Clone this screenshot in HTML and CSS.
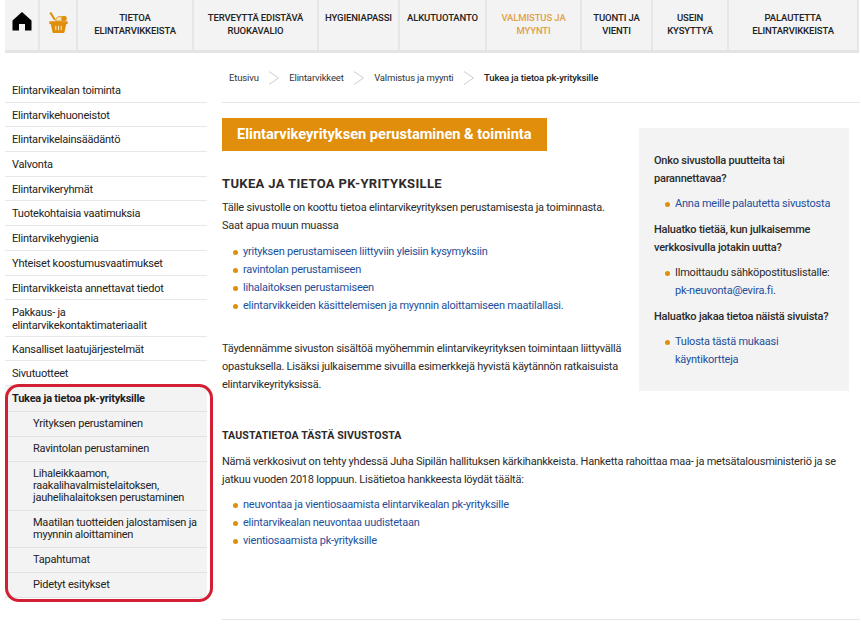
FILE: index.html
```html
<!DOCTYPE html>
<html lang="fi">
<head>
<meta charset="utf-8">
<title>Tukea ja tietoa pk-yrityksille</title>
<link rel="stylesheet" href="styles.css">
</head>
<body>
<nav class="topnav">
  <a class="nav-item w-home"><svg width="20" height="20" viewBox="0 0 20 20"><path d="M10 1 L19.500 9.500 V19.500 H13 V13 H7 V19.500 H.5 V9.500 Z" fill="#000"/></svg></a>
  <a class="nav-item w-basket"><svg width="21" height="22" viewBox="0 0 22 24"><path d="M1 1 L3 0 L8 8 L6 9 Z" fill="#e08e0b"/><path d="M8 8 Q11 3 16 6 L15 10 H8 Z" fill="#f6e3c0" stroke="#e08e0b"/><circle cx="17" cy="7" r="3" fill="#e08e0b"/><path d="M1 10 H21 V13 H19.500 L17.500 22 Q17 23 16 23 H6 Q5 23 4.500 22 L2.500 13 H1 Z" fill="#e08e0b"/><path d="M8 15 V20 M11 15 V20 M14 15 V20" stroke="#f6e3c0" stroke-width="1.200"/></svg></a>
  <a class="nav-item w1">TIETOA<br>ELINTARVIKKEISTA</a>
  <a class="nav-item w2">TERVEYTTÄ EDISTÄVÄ<br>RUOKAVALIO</a>
  <a class="nav-item w3">HYGIENIAPASSI</a>
  <a class="nav-item w4">ALKUTUOTANTO</a>
  <a class="nav-item w5 current">VALMISTUS JA<br>MYYNTI</a>
  <a class="nav-item w6">TUONTI JA<br>VIENTI</a>
  <a class="nav-item w7">USEIN<br>KYSYTTYÄ</a>
  <a class="nav-item w8">PALAUTETTA<br>ELINTARVIKKEISTA</a>
</nav>

<div class="page">
  <aside class="sidebar">
    <ul class="side-list">
      <li>Elintarvikealan toiminta</li>
      <li>Elintarvikehuoneistot</li>
      <li>Elintarvikelainsäädäntö</li>
      <li>Valvonta</li>
      <li>Elintarvikeryhmät</li>
      <li>Tuotekohtaisia vaatimuksia</li>
      <li>Elintarvikehygienia</li>
      <li>Yhteiset koostumusvaatimukset</li>
      <li>Elintarvikkeista annettavat tiedot</li>
      <li class="multi">Pakkaus- ja elintarvikekontaktimateriaalit</li>
      <li>Kansalliset laatujärjestelmät</li>
      <li>Sivutuotteet</li>
    </ul>
    <div class="active-group">
      <div class="active-title">Tukea ja tietoa pk-yrityksille</div>
      <ul class="sub-list">
        <li>Yrityksen perustaminen</li>
        <li>Ravintolan perustaminen</li>
        <li>Lihaleikkaamon, raakalihavalmistelaitoksen, jauhelihalaitoksen perustaminen</li>
        <li>Maatilan tuotteiden jalostamisen ja myynnin aloittaminen</li>
        <li>Tapahtumat</li>
        <li>Pidetyt esitykset</li>
      </ul>
    </div>
  </aside>

  <main class="main">
    <div class="crumbs">
      <span>Etusivu</span><svg class="sep" width="12" height="14" viewBox="0 0 12 14"><path d="M1 .5 L10.500 7 L1 13.500" fill="none" stroke="#ccc"/></svg>
      <span>Elintarvikkeet</span><svg class="sep" width="12" height="14" viewBox="0 0 12 14"><path d="M1 .5 L10.500 7 L1 13.500" fill="none" stroke="#ccc"/></svg>
      <span>Valmistus ja myynti</span><svg class="sep" width="12" height="14" viewBox="0 0 12 14"><path d="M1 .5 L10.500 7 L1 13.500" fill="none" stroke="#ccc"/></svg>
      <span class="crumb-current">Tukea ja tietoa pk-yrityksille</span>
    </div>

    <div class="columns">
      <div class="content">
        <div class="banner">Elintarvikeyrityksen perustaminen &amp; toiminta</div>
        <h1>TUKEA JA TIETOA PK-YRITYKSILLE</h1>
        <p>Tälle sivustolle on koottu tietoa elintarvikeyrityksen perustamisesta ja toiminnasta. Saat apua muun muassa</p>
        <ul class="links">
          <li><a>yrityksen perustamiseen liittyviin yleisiin kysymyksiin</a></li>
          <li><a>ravintolan perustamiseen</a></li>
          <li><a>lihalaitoksen perustamiseen</a></li>
          <li><a>elintarvikkeiden käsittelemisen ja myynnin aloittamiseen maatilallasi.</a></li>
        </ul>
        <p class="gap-p">Täydennämme sivuston sisältöä myöhemmin elintarvikeyrityksen toimintaan liittyvällä opastuksella. Lisäksi julkaisemme sivuilla esimerkkejä hyvistä käytännön ratkaisuista elintarvikeyrityksissä.</p>
      </div>
      <aside class="infobox">
        <p class="q">Onko sivustolla puutteita tai parannettavaa?</p>
        <ul class="links">
          <li><a>Anna meille palautetta sivustosta</a></li>
        </ul>
        <p class="q">Haluatko tietää, kun julkaisemme verkkosivulla jotakin uutta?</p>
        <ul class="links">
          <li>Ilmoittaudu sähköpostituslistalle: <a>pk-neuvonta@evira.fi</a>.</li>
        </ul>
        <p class="q">Haluatko jakaa tietoa näistä sivuista?</p>
        <ul class="links">
          <li><a>Tulosta tästä mukaasi käyntikortteja</a></li>
        </ul>
      </aside>
    </div>

    <div class="background">
      <h2>TAUSTATIETOA TÄSTÄ SIVUSTOSTA</h2>
      <p>Nämä verkkosivut on tehty yhdessä Juha Sipilän hallituksen kärkihankkeista. Hanketta rahoittaa maa- ja metsätalousministeriö ja se jatkuu vuoden 2018 loppuun. Lisätietoa hankkeesta löydät täältä:</p>
      <ul class="links">
        <li><a>neuvontaa ja vientiosaamista elintarvikealan pk-yrityksille</a></li>
        <li><a>elintarvikealan neuvontaa uudistetaan</a></li>
        <li><a>vientiosaamista pk-yrityksille</a></li>
      </ul>
    </div>
    <div class="bottom-rule"></div>
  </main>
</div>
</body>
</html>
```
FILE: styles.css
```css
* { box-sizing: border-box; }
html, body { margin: 0; padding: 0; background: #fff; }
body {
  font-family: Roboto, "Liberation Sans", sans-serif;
  font-size: 11px;
  letter-spacing: -0.23px;
  color: #2b2b2b;
  width: 861px;
  height: 625px;
  overflow: hidden;
}
ul { list-style: none; margin: 0; padding: 0; }
p { margin: 0; }

.topnav {
  display: flex;
  height: 53px;
  margin-left: 5px;
  width: 854px;
  background: #f3f3f3;
  border-bottom: 3px solid #e4e4e4;
}
.nav-item {
  display: flex;
  align-items: flex-start;
  justify-content: center;
  text-align: center;
  padding-top: 11px;
  font-size: 9.500px;
  font-weight: 500;
  letter-spacing: -0.12px;
  line-height: 13px;
  color: #222;
  border-right: 2px solid #e6e6e6;
  flex: none;
}
.w-home { width: 35px; padding-top: 11px; }
.w-basket { width: 38px; padding-top: 12px; }
.w1 { width: 116px; }
.w2 { width: 125px; }
.w3 { width: 81px; }
.w4 { width: 87px; }
.w5 { width: 95px; }
.w6 { width: 71px; }
.w7 { width: 76px; }
.w8 { width: 130px; }
.current { color: #e0a14a; }

.page { display: flex; }

.sidebar { width: 202px; margin-left: 5px; padding-top: 25px; flex: none; }
.side-list li {
  padding: 6px 0 0 7px;
  line-height: 14px;
  height: 24.700px;
  border-bottom: 1px solid #e8e8e8;
  color: #222;
}
.side-list li.multi { padding-top: 7px; line-height: 12.500px; height: 36.600px; padding-right: 40px; }

.active-group { position: relative; background: #f3f3f3; }
.active-group::after {
  content: "";
  box-sizing: border-box;
  position: absolute;
  left: 0;
  top: -2px;
  width: 208px;
  height: 218px;
  border: 3px solid #d31f33;
  border-radius: 14px;
  pointer-events: none;
}
.active-title {
  font-weight: 700;
  padding: 6px 0 0 7px;
  line-height: 14px;
  height: 26px;
  color: #1e1e1e;
  border-bottom: 1px solid #e2e2e2;
}
.sub-list li {
  padding: 6px 6px 6px 28px;
  line-height: 12px;
  color: #222;
  border-bottom: 1px solid #e2e2e2;
}

.main { flex: none; width: 638px; margin-left: 15px; }
.crumbs {
  display: flex;
  align-items: center;
  height: 50px;
  padding-left: 7px;
  font-size: 9.500px;
  letter-spacing: -0.15px;
  color: #333;
  border-bottom: 1px solid #e6e6e6;
}
.sep { margin: 0 9px 0 9.500px; }
.crumb-current { font-weight: 500; color: #222; }

.columns { display: flex; }
.content { width: 405px; margin-right: 12px; flex: none; padding-top: 15px; }
.banner {
  display: inline-block;
  background: #e08e0b;
  color: #fff;
  font-weight: 700;
  font-size: 14.600px;
  letter-spacing: 0;
  height: 33px;
  line-height: 33px;
  padding: 0 15px;
}
h1 {
  font-size: 13px;
  font-weight: 700;
  letter-spacing: 0.350px;
  margin: 25px 0 0;
  line-height: 16px;
  color: #2e2a2a;
}
.content p, .background p { line-height: 18px; color: #2b2b2b; }
h1 + p { margin-top: 7px; }
.links li {
  position: relative;
  padding-left: 21px;
  line-height: 18px;
}
.links li::before {
  content: "";
  position: absolute;
  left: 11px;
  top: 7px;
  width: 5px;
  height: 5px;
  border-radius: 50%;
  background: #e08e0b;
}
.links a { color: #1d4f9c; }
.content .links { margin-top: 8px; }
.content .gap-p { margin-top: 25px; }

.infobox {
  width: 210px;
  height: 263px;
  margin-top: 25px;
  background: #f3f3f3;
  padding: 24px 15px 0;
  flex: none;
}
.infobox .q { font-weight: 500; line-height: 18px; color: #2b2b2b; }
.infobox .links { margin: 6.500px 0 8.500px; }

.background { margin-top: 35px; }
h2 { font-size: 10.600px; font-weight: 700; letter-spacing: 0.100px; margin: 0 0 10px; line-height: 14px; color: #2e2a2a; }
.background .links { margin-top: 7px; }
.bottom-rule { height: 1px; background: #e6e6e6; margin-top: 69px; }
```
